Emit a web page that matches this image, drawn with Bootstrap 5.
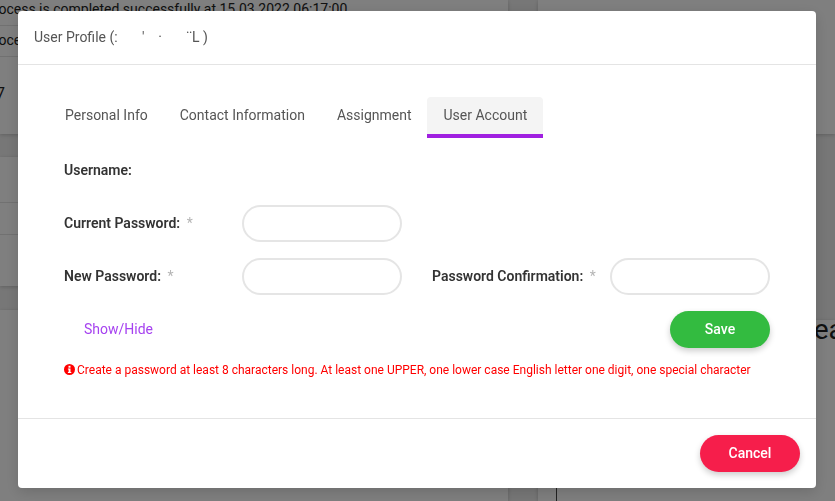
<!DOCTYPE html>
<html lang="en">
<head>
  <meta charset="UTF-8">
  <title>User Profile</title>
  <link href="https://cdn.jsdelivr.net/npm/bootstrap@5.3.3/dist/css/bootstrap.min.css" rel="stylesheet">
  <style>
    html, body {
      height: 501px;
      overflow: hidden;
    }
    body {
      background: #efefef;
      font-family: Roboto, "Liberation Sans", sans-serif;
      color: #333;
    }
    .page-cols {
      display: flex;
      gap: 30px;
      overflow: hidden;
    }
    .page-left { width: 508px; flex: none; }
    .page-right { flex: 1 1 0; min-width: 0; }
    .page-panel {
      background: #fff;
      box-shadow: 0 1px 4px rgba(0,0,0,.2);
      overflow: hidden;
    }
    .panel-one { height: 134px; }
    .panel-two { height: 129px; margin-top: 23px; }
    .panel-three { height: 191px; margin-top: 24px; }
    .panel-side { height: 181px; margin-top: 186px; padding-left: 18px; }
    .panel-row {
      font-size: 14px;
      line-height: 19px;
      text-indent: -15px;
      white-space: nowrap;
      border-bottom: 1px solid #e2e2e2;
      color: #222;
    }
    .panel-row.r1 { height: 26px; }
    .panel-row.r2 { height: 31px; padding-top: 5px; }
    .panel-num { font-size: 16px; line-height: 19px; text-indent: -4px; padding-top: 27px; color: #222; }
    .gap-row { height: 46px; border-bottom: 1px solid #e2e2e2; }
    .gap-row-b { height: 32px; border-bottom: 1px solid #e2e2e2; }
    .side-inner {
      border-left: 1px solid #444;
      height: 100%;
      padding-left: 240px;
      font-size: 28px;
      color: #222;
      line-height: 20px;
      white-space: nowrap;
    }
    .profile-dialog {
      max-width: 798px;
      margin: 11px 0 0 18px;
    }
    .profile-dialog .modal-content {
      height: 477px;
      border: 0;
      border-radius: 4px;
      box-shadow: 0 4px 14px rgba(0,0,0,.15);
    }
    .profile-dialog .modal-header {
      height: 54px;
      padding: 0 16px;
      border-bottom: 1px solid #e4e4e4;
      font-size: 14px;
      color: #555;
    }
    .profile-dialog .modal-body {
      padding: 32px 46px 0;
    }
    .profile-dialog .modal-footer {
      height: 70px;
      padding: 0 16px;
      border-top: 1px solid #e4e4e4;
      align-items: flex-start;
    }
    .profile-tabs {
      margin-left: -15px;
      height: 41px;
      border: 0;
    }
    .profile-tabs .nav-link {
      height: 41px;
      margin: 0;
      padding: 9px 16px 0;
      font-size: 14px;
      line-height: 18px;
      color: #555;
      border: 0;
      border-radius: 4px 4px 0 0;
    }
    .profile-tabs .nav-link.active {
      background: #f4f4f4;
      color: #555;
      border-bottom: 4px solid #a01fe0;
    }
    .field-label {
      font-size: 14px;
      font-weight: 600;
      line-height: 37px;
      color: #333;
      margin: 0;
      white-space: nowrap;
    }
    .field-label .req {
      color: #b5b5b5;
      font-weight: 400;
      margin-left: 3px;
    }
    .username-row { height: 37px; margin-top: 14px; margin-bottom: 16px; }
    .field-row {
      display: flex;
      gap: 30px;
      height: 37px;
      margin-bottom: 16px;
    }
    .pw-field { display: flex; width: 338px; }
    .pw-field .field-label { width: 178px; }
    .pw-input {
      width: 160px;
      height: 37px;
      padding: 0 14px;
      border: 2px solid #e5e5e5;
      border-radius: 19px;
    }
    .pw-input:focus { border-color: #e5e5e5; box-shadow: none; }
    .show-row {
      height: 37px;
      padding-left: 20px;
    }
    .show-link {
      font-size: 14px;
      color: #a642f0;
      text-decoration: none;
    }
    .pill-btn {
      width: 100px;
      height: 37px;
      padding: 0;
      border: 0;
      border-radius: 19px;
      font-size: 14px;
      font-weight: 500;
      color: #fff;
      box-shadow: 0 3px 6px rgba(0,0,0,.2);
    }
    .btn-save, .btn-save:hover { background: #33bb40; color: #fff; }
    .btn-cancel, .btn-cancel:hover { background: #f61e4b; color: #fff; margin: 16px 0 0; }
    .pw-hint {
      margin: 13px 0 0;
      font-size: 12px;
      line-height: 18px;
      color: #f00;
      white-space: nowrap;
    }
    .pw-hint svg { vertical-align: -1px; margin-right: 2px; }
  </style>
</head>
<body>
  <div class="page-cols">
    <div class="page-left">
      <div class="page-panel panel-one">
        <div class="panel-row r1">Process is completed successfully at 15.03.2022 06:17:00</div>
        <div class="panel-row r2">Process</div>
        <div class="panel-num">7</div>
      </div>
      <div class="page-panel panel-two">
        <div class="gap-row"></div>
        <div class="gap-row-b"></div>
      </div>
      <div class="page-panel panel-three"></div>
    </div>
    <div class="page-right">
      <div class="page-panel panel-one"></div>
      <div class="page-panel panel-side">
        <div class="side-inner">Search</div>
      </div>
    </div>
  </div>

  <div class="modal-backdrop show"></div>
  <div class="modal d-block" tabindex="-1">
    <div class="modal-dialog profile-dialog">
      <div class="modal-content">
        <div class="modal-header">
          <div>User Profile (:&nbsp;&nbsp;&nbsp;&nbsp;&nbsp;&nbsp;&nbsp;'&nbsp;&nbsp;&nbsp;&nbsp;·&nbsp;&nbsp;&nbsp;&nbsp;&nbsp;&nbsp;&nbsp;¨L )</div>
        </div>
        <div class="modal-body">
          <ul class="nav nav-tabs profile-tabs">
            <li class="nav-item"><a class="nav-link" href="#">Personal Info</a></li>
            <li class="nav-item"><a class="nav-link" href="#">Contact Information</a></li>
            <li class="nav-item"><a class="nav-link" href="#">Assignment</a></li>
            <li class="nav-item"><a class="nav-link active" href="#">User Account</a></li>
          </ul>
          <div class="username-row">
            <label class="field-label">Username:</label>
          </div>
          <div class="field-row">
            <div class="pw-field">
              <label class="field-label">Current Password: <span class="req">*</span></label>
              <input type="password" class="form-control pw-input">
            </div>
          </div>
          <div class="field-row">
            <div class="pw-field">
              <label class="field-label">New Password: <span class="req">*</span></label>
              <input type="password" class="form-control pw-input">
            </div>
            <div class="pw-field">
              <label class="field-label">Password Confirmation: <span class="req">*</span></label>
              <input type="password" class="form-control pw-input">
            </div>
          </div>
          <div class="show-row d-flex justify-content-between align-items-center">
            <a class="show-link" href="#">Show/Hide</a>
            <button type="button" class="btn pill-btn btn-save">Save</button>
          </div>
          <p class="pw-hint"><svg width="11" height="11" viewBox="0 0 11 11"><circle cx="5.5" cy="5.5" r="5.5" fill="#f00"/><rect x="4.5" y="1.8" width="2" height="1.9" fill="#fff"/><path d="M3.9 4.5h2.6v3.4h.8v1H3.9v-1h.7V5.5h-.7z" fill="#fff"/></svg>Create a password at least 8 characters long. At least one UPPER, one lower case English letter one digit, one special character</p>
        </div>
        <div class="modal-footer">
          <button type="button" class="btn pill-btn btn-cancel">Cancel</button>
        </div>
      </div>
    </div>
  </div>

  <script src="https://cdn.jsdelivr.net/npm/bootstrap@5.3.3/dist/js/bootstrap.bundle.min.js"></script>
</body>
</html>
